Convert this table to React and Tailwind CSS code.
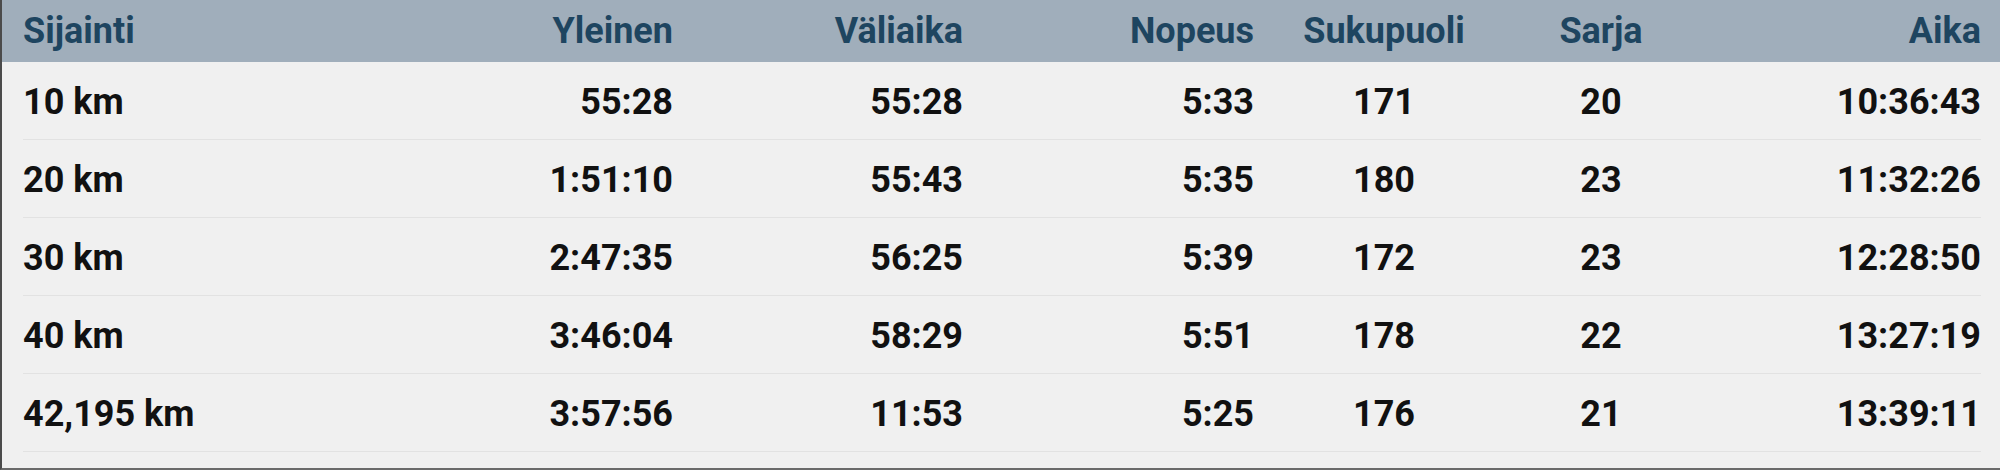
import React from "react";

const COLS = [
  { label: "Sijainti", align: "text-left" },
  { label: "Yleinen", align: "text-right" },
  { label: "Väliaika", align: "text-right" },
  { label: "Nopeus", align: "text-right" },
  { label: "Sukupuoli", align: "text-center" },
  { label: "Sarja", align: "text-center" },
  { label: "Aika", align: "text-right" },
];

const ROWS = [
  ["10 km", "55:28", "55:28", "5:33", "171", "20", "10:36:43"],
  ["20 km", "1:51:10", "55:43", "5:35", "180", "23", "11:32:26"],
  ["30 km", "2:47:35", "56:25", "5:39", "172", "23", "12:28:50"],
  ["40 km", "3:46:04", "58:29", "5:51", "178", "22", "13:27:19"],
  ["42,195 km", "3:57:56", "11:53", "5:25", "176", "21", "13:39:11"],
];

const GRID =
  "grid grid-cols-[377px_273px_290px_291px_260px_174px_1fr] items-center";

const App = () => {
  return (
    <div className="w-[2000px] h-[470px] bg-[#f0f0f0] border-l-2 border-b-2 border-l-[#4b4b4b] border-b-[#6a6a6a] font-['Roboto',sans-serif] font-bold text-[36px] leading-none overflow-hidden">
      <div className="bg-[#a0aebb] h-[62px] pl-[21px] pr-[19px]">
        <div className={`${GRID} h-full text-[#1e4560]`}>
          {COLS.map((c) => (
            <div key={c.label} className={c.align}>
              {c.label}
            </div>
          ))}
        </div>
      </div>

      <div className="pl-[21px] pr-[19px]">
        {ROWS.map((row) => (
          <div
            key={row[0]}
            className={`${GRID} h-[78px] border-b border-[#e2e2e2] text-[#111111] pt-[3px]`}
          >
            {row.map((cell, i) => (
              <div key={i} className={COLS[i].align}>
                {cell}
              </div>
            ))}
          </div>
        ))}
      </div>
    </div>
  );
};

export default App;
